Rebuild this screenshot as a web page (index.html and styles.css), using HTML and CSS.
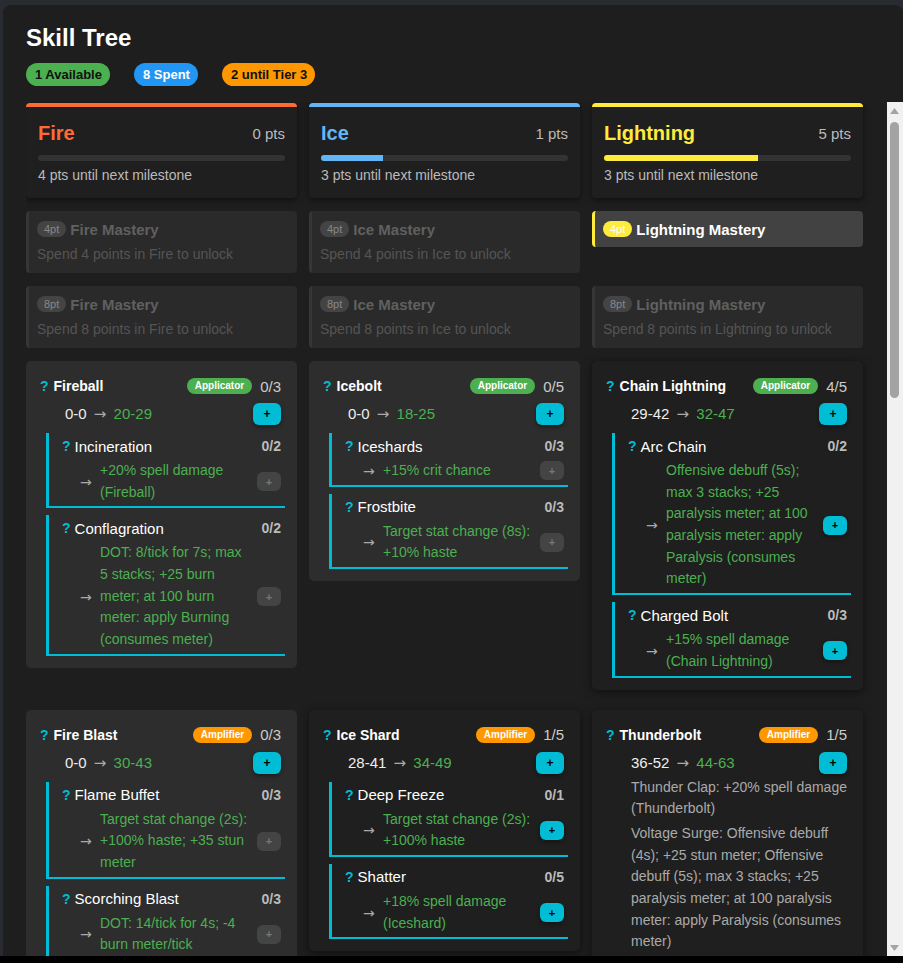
FILE: index.html
```html
<!DOCTYPE html>
<html>
	<head>
		<meta charset="utf-8" />
		<title>Skill Tree</title>
		<link rel="stylesheet" href="styles.css">
	</head>
	<body>
		<div class="backdrop">
			<div class="modal">
				<h1 class="title">Skill Tree</h1>
				<div class="summary">
					<span class="chip chip-green">1 Available</span>
					<span class="chip chip-blue">8 Spent</span>
					<span class="chip chip-orange">2 until Tier 3</span>
				</div>
				<div class="tree-wrap">
					<div class="tree">
						<div class="grid">
							<!-- schools -->
							<div class="school fire">
								<div class="school-top"><span class="school-name">Fire</span><span class="school-pts">0 pts</span></div>
								<div class="bar"><div class="bar-fill" style="width:0%"></div></div>
								<div class="school-note">4 pts until next milestone</div>
							</div>
							<div class="school ice">
								<div class="school-top"><span class="school-name">Ice</span><span class="school-pts">1 pts</span></div>
								<div class="bar"><div class="bar-fill" style="width:25%"></div></div>
								<div class="school-note">3 pts until next milestone</div>
							</div>
							<div class="school lightning">
								<div class="school-top"><span class="school-name">Lightning</span><span class="school-pts">5 pts</span></div>
								<div class="bar"><div class="bar-fill" style="width:62.5%"></div></div>
								<div class="school-note">3 pts until next milestone</div>
							</div>

							<!-- 4pt masteries -->
							<div class="mastery">
								<div class="mastery-head"><span class="tier">4pt</span><span class="mastery-name">Fire Mastery</span></div>
								<div class="mastery-note">Spend 4 points in Fire to unlock</div>
							</div>
							<div class="mastery">
								<div class="mastery-head"><span class="tier">4pt</span><span class="mastery-name">Ice Mastery</span></div>
								<div class="mastery-note">Spend 4 points in Ice to unlock</div>
							</div>
							<div class="mastery open">
								<div class="mastery-head"><span class="tier">4pt</span><span class="mastery-name">Lightning Mastery</span></div>
							</div>

							<!-- 8pt masteries -->
							<div class="mastery">
								<div class="mastery-head"><span class="tier">8pt</span><span class="mastery-name">Fire Mastery</span></div>
								<div class="mastery-note">Spend 8 points in Fire to unlock</div>
							</div>
							<div class="mastery">
								<div class="mastery-head"><span class="tier">8pt</span><span class="mastery-name">Ice Mastery</span></div>
								<div class="mastery-note">Spend 8 points in Ice to unlock</div>
							</div>
							<div class="mastery">
								<div class="mastery-head"><span class="tier">8pt</span><span class="mastery-name">Lightning Mastery</span></div>
								<div class="mastery-note">Spend 8 points in Lightning to unlock</div>
							</div>

							<!-- tier 1 skills -->
							<div class="skill">
								<div class="skill-head"><span class="help">?</span><span class="skill-name">Fireball</span><span class="tag applicator">Applicator</span><span class="rank">0/3</span></div>
								<div class="dmg-row"><span class="dmg">0-0 <span class="arrow">→</span> <span class="up">20-29</span></span><button class="plus">+</button></div>
								<div class="sub">
									<div class="sub-head"><span class="help">?</span><span class="sub-name">Incineration</span><span class="sub-rank">0/2</span></div>
									<div class="sub-row"><span class="arrow">→</span><span class="sub-desc">+20% spell damage (Fireball)</span><button class="plus small off">+</button></div>
								</div>
								<div class="sub">
									<div class="sub-head"><span class="help">?</span><span class="sub-name">Conflagration</span><span class="sub-rank">0/2</span></div>
									<div class="sub-row"><span class="arrow">→</span><span class="sub-desc">DOT: 8/tick for 7s; max 5 stacks; +25 burn meter; at 100 burn meter: apply Burning (consumes meter)</span><button class="plus small off">+</button></div>
								</div>
							</div>
							<div class="skill">
								<div class="skill-head"><span class="help">?</span><span class="skill-name">Icebolt</span><span class="tag applicator">Applicator</span><span class="rank">0/5</span></div>
								<div class="dmg-row"><span class="dmg">0-0 <span class="arrow">→</span> <span class="up">18-25</span></span><button class="plus">+</button></div>
								<div class="sub">
									<div class="sub-head"><span class="help">?</span><span class="sub-name">Iceshards</span><span class="sub-rank">0/3</span></div>
									<div class="sub-row"><span class="arrow">→</span><span class="sub-desc">+15% crit chance</span><button class="plus small off">+</button></div>
								</div>
								<div class="sub">
									<div class="sub-head"><span class="help">?</span><span class="sub-name">Frostbite</span><span class="sub-rank">0/3</span></div>
									<div class="sub-row"><span class="arrow">→</span><span class="sub-desc">Target stat change (8s): +10% haste</span><button class="plus small off">+</button></div>
								</div>
							</div>
							<div class="skill learned">
								<div class="skill-head"><span class="help">?</span><span class="skill-name">Chain Lightning</span><span class="tag applicator">Applicator</span><span class="rank">4/5</span></div>
								<div class="dmg-row"><span class="dmg">29-42 <span class="arrow">→</span> <span class="up">32-47</span></span><button class="plus">+</button></div>
								<div class="sub">
									<div class="sub-head"><span class="help">?</span><span class="sub-name">Arc Chain</span><span class="sub-rank">0/2</span></div>
									<div class="sub-row"><span class="arrow">→</span><span class="sub-desc">Offensive debuff (5s); max 3 stacks; +25 paralysis meter; at 100 paralysis meter: apply Paralysis (consumes meter)</span><button class="plus small">+</button></div>
								</div>
								<div class="sub">
									<div class="sub-head"><span class="help">?</span><span class="sub-name">Charged Bolt</span><span class="sub-rank">0/3</span></div>
									<div class="sub-row"><span class="arrow">→</span><span class="sub-desc">+15% spell damage (Chain Lightning)</span><button class="plus small">+</button></div>
								</div>
							</div>

							<!-- tier 2 skills -->
							<div class="skill">
								<div class="skill-head"><span class="help">?</span><span class="skill-name">Fire Blast</span><span class="tag amplifier">Amplifier</span><span class="rank">0/3</span></div>
								<div class="dmg-row"><span class="dmg">0-0 <span class="arrow">→</span> <span class="up">30-43</span></span><button class="plus">+</button></div>
								<div class="sub">
									<div class="sub-head"><span class="help">?</span><span class="sub-name">Flame Buffet</span><span class="sub-rank">0/3</span></div>
									<div class="sub-row"><span class="arrow">→</span><span class="sub-desc">Target stat change (2s): +100% haste; +35 stun meter</span><button class="plus small off">+</button></div>
								</div>
								<div class="sub">
									<div class="sub-head"><span class="help">?</span><span class="sub-name">Scorching Blast</span><span class="sub-rank">0/3</span></div>
									<div class="sub-row"><span class="arrow">→</span><span class="sub-desc">DOT: 14/tick for 4s; -4 burn meter/tick</span><button class="plus small off">+</button></div>
								</div>
							</div>
							<div class="skill learned">
								<div class="skill-head"><span class="help">?</span><span class="skill-name">Ice Shard</span><span class="tag amplifier">Amplifier</span><span class="rank">1/5</span></div>
								<div class="dmg-row"><span class="dmg">28-41 <span class="arrow">→</span> <span class="up">34-49</span></span><button class="plus">+</button></div>
								<div class="sub">
									<div class="sub-head"><span class="help">?</span><span class="sub-name">Deep Freeze</span><span class="sub-rank">0/1</span></div>
									<div class="sub-row"><span class="arrow">→</span><span class="sub-desc">Target stat change (2s): +100% haste</span><button class="plus small">+</button></div>
								</div>
								<div class="sub">
									<div class="sub-head"><span class="help">?</span><span class="sub-name">Shatter</span><span class="sub-rank">0/5</span></div>
									<div class="sub-row"><span class="arrow">→</span><span class="sub-desc">+18% spell damage (Iceshard)</span><button class="plus small">+</button></div>
								</div>
							</div>
							<div class="skill learned">
								<div class="skill-head"><span class="help">?</span><span class="skill-name">Thunderbolt</span><span class="tag amplifier">Amplifier</span><span class="rank">1/5</span></div>
								<div class="dmg-row"><span class="dmg">36-52 <span class="arrow">→</span> <span class="up">44-63</span></span><button class="plus">+</button></div>
								<div class="effects">
									<p>Thunder Clap: +20% spell damage (Thunderbolt)</p>
									<p>Voltage Surge: Offensive debuff (4s); +25 stun meter; Offensive debuff (5s); max 3 stacks; +25 paralysis meter; at 100 paralysis meter: apply Paralysis (consumes meter)</p>
								</div>
							</div>
						</div>
					</div>
					<!-- scrollbar of the tree panel -->
					<div class="scrollbar">
						<div class="sb-btn"><svg width="16" height="16" viewBox="0 0 16 16"><path d="M3 12 L7.5 6 L12 12 Z" fill="#a3a3a3"/></svg></div>
						<div class="sb-track"><div class="sb-thumb"></div></div>
						<div class="sb-btn"><svg width="16" height="16" viewBox="0 0 16 16"><path d="M3 5 L7.5 11 L12 5 Z" fill="#a3a3a3"/></svg></div>
					</div>
				</div>
			</div>
		</div>
	</body>
</html>
```

FILE: styles.css
```css
*{margin: 0;padding: 0;box-sizing: border-box;}
body
{
	background: #000;
	font-family: "Liberation Sans", Arial, sans-serif;
	color: #eee;
}
.backdrop
{
	height: 956px;
	padding: 5px 0 0 3px;
	background: #282b30;
	overflow: hidden;
}
.modal
{
	width: 900px;
	height: 951px;
	padding: 19px 0 0 23px;
	background: #1e1e1e;
	border-radius: 8px 8px 0 0;
	display: flex;
	flex-direction: column;
}
.title
{
	font-size: 24px;
	line-height: 28px;
	font-weight: bold;
	color: #fff;
}
.summary
{
	display: flex;
	gap: 24px;
	margin-top: 11px;
}
.chip
{
	font-size: 13px;
	line-height: 15px;
	font-weight: bold;
	padding: 4px 8px 4px 9px;
	border-radius: 12px;
}
.chip-green{background: #4caf50;color: #111;}
.chip-blue{background: #2196f3;color: #fff;}
.chip-orange{background: #ff9800;color: #111;}

.tree-wrap
{
	flex: 1;
	min-height: 0;
	margin-top: 16px;
	display: flex;
}
.tree
{
	flex: 1;
	overflow: hidden;
	padding: 1px 24px 0 0;
}
.scrollbar
{
	width: 16px;
	background: #f1f1f1;
	display: flex;
	flex-direction: column;
}
.sb-btn{height: 16px;}
.sb-btn svg{display: block;}
.sb-track{flex: 1;padding: 4px 4px 0 3px;}
.sb-thumb
{
	height: 276px;
	border-radius: 5px;
	background: #a3a3a3;
}
.grid
{
	display: grid;
	grid-template-columns: repeat(3, 271px);
	column-gap: 12px;
	row-gap: 13px;
	align-items: start;
}

/* school header cards */
.school
{
	background: #1f1f1f;
	border-top: 4px solid;
	border-radius: 4px;
	padding: 14px 12px 14px;
	box-shadow: 0 2px 6px rgba(0,0,0,0.5);
}
.school-top
{
	display: flex;
	justify-content: space-between;
	align-items: center;
	height: 24px;
}
.school-name{font-size: 20px;font-weight: bold;}
.school-pts{font-size: 15px;color: #bbb;}
.bar
{
	height: 6px;
	margin-top: 10px;
	border-radius: 3px;
	background: #333;
	overflow: hidden;
}
.bar-fill{height: 100%;}
.school-note
{
	margin-top: 6px;
	font-size: 14px;
	line-height: 17px;
	color: #bbb;
}
.fire{border-top-color: #ff6b35;}
.fire .school-name{color: #ff6b35;}
.fire .bar-fill{background: #ff6b35;}
.ice{border-top-color: #64b5f6;}
.ice .school-name{color: #64b5f6;}
.ice .bar-fill{background: #64b5f6;}
.lightning{border-top-color: #ffeb3b;}
.lightning .school-name{color: #ffeb3b;}
.lightning .bar-fill{background: #ffeb3b;}

/* mastery slots */
.mastery
{
	background: #2a2a2a;
	border-left: 3px solid #363636;
	border-radius: 4px;
	padding: 8px 8px 10px;
}
.mastery-head
{
	display: flex;
	align-items: center;
	gap: 4px;
	height: 20px;
}
.tier
{
	font-size: 11px;
	line-height: 12px;
	padding: 2px 7px;
	border-radius: 8px;
	background: #444;
	color: #888;
}
.mastery-name{font-size: 15px;font-weight: bold;color: #606060;}
.mastery-note
{
	margin-top: 6px;
	font-size: 14px;
	line-height: 18px;
	color: #555;
}
.mastery.open
{
	background: #424242;
	border-left-color: #ffeb3b;
	padding-bottom: 8px;
}
.mastery.open .tier{background: #ffeb3b;color: #fff;}
.mastery.open .mastery-name{color: #fff;}

/* skill cards */
.skill
{
	background: #2d2d2d;
	border-radius: 5px;
	padding: 14px 16px 12px 14px;
	margin-bottom: 7px;
}
.skill.learned
{
	background: #1f1f1f;
	box-shadow: 0 2px 8px rgba(0,0,0,0.5);
}
.skill-head
{
	display: flex;
	align-items: center;
	height: 22px;
}
.help
{
	font-size: 14px;
	font-weight: bold;
	color: #00bcd4;
	margin-right: 5px;
}
.skill-name{flex: 1;font-size: 14px;font-weight: bold;color: #fff;}
.tag
{
	font-size: 10px;
	line-height: 12px;
	font-weight: bold;
	color: #fff;
	padding: 2px 8px;
	border-radius: 8px;
}
.applicator{background: #4caf50;}
.amplifier{background: #ff9800;}
.rank{margin-left: 8px;font-size: 15px;color: #ccc;}
.dmg-row
{
	display: flex;
	align-items: center;
	justify-content: space-between;
	margin-top: 6px;
	padding-left: 25px;
}
.dmg{font-size: 15px;color: #eee;}
.arrow
{
	font-family: "DejaVu Sans", sans-serif;
	color: #aaa;
}
.dmg .arrow{margin: 0 3px;}
.up{color: #4caf50;}
.plus
{
	width: 28px;
	height: 22px;
	border: 0;
	border-radius: 6px;
	background: #00bcd4;
	color: #000;
	font-family: inherit;
	font-size: 12px;
	font-weight: bold;
	box-shadow: 0 2px 4px rgba(0,0,0,0.4);
}
.plus.small
{
	width: 24px;
	height: 19px;
	margin-left: 6px;
	font-size: 11px;
}
.plus.off
{
	background: #444;
	color: #777;
	box-shadow: none;
}

/* talents under a skill */
.sub
{
	margin: 8px -4px 0 6px;
	padding: 4px 4px 3px 13px;
	border-left: 3px solid #00bcd4;
	border-bottom: 2px solid #00bcd4;
}
.sub + .sub{margin-top: 7px;}
.sub-head
{
	display: flex;
	align-items: center;
	height: 18px;
}
.sub-head .help{margin-right: 4px;}
.sub-name{flex: 1;font-size: 15px;color: #fff;}
.sub-rank{font-size: 14px;font-weight: bold;color: #bbb;}
.sub-row
{
	display: flex;
	align-items: center;
	margin-top: 5px;
	padding-left: 18px;
}
.sub-row .arrow{width: 13px;margin-right: 7px;font-size: 14px;}
.sub-desc
{
	flex: 1;
	font-size: 14px;
	line-height: 1.55;
	color: #4caf50;
}
.effects
{
	margin: 3px -4px 0 0;
	padding-left: 25px;
	font-size: 14px;
	line-height: 1.55;
	color: #aaa;
}
.effects p{margin-bottom: 3px;}
```
